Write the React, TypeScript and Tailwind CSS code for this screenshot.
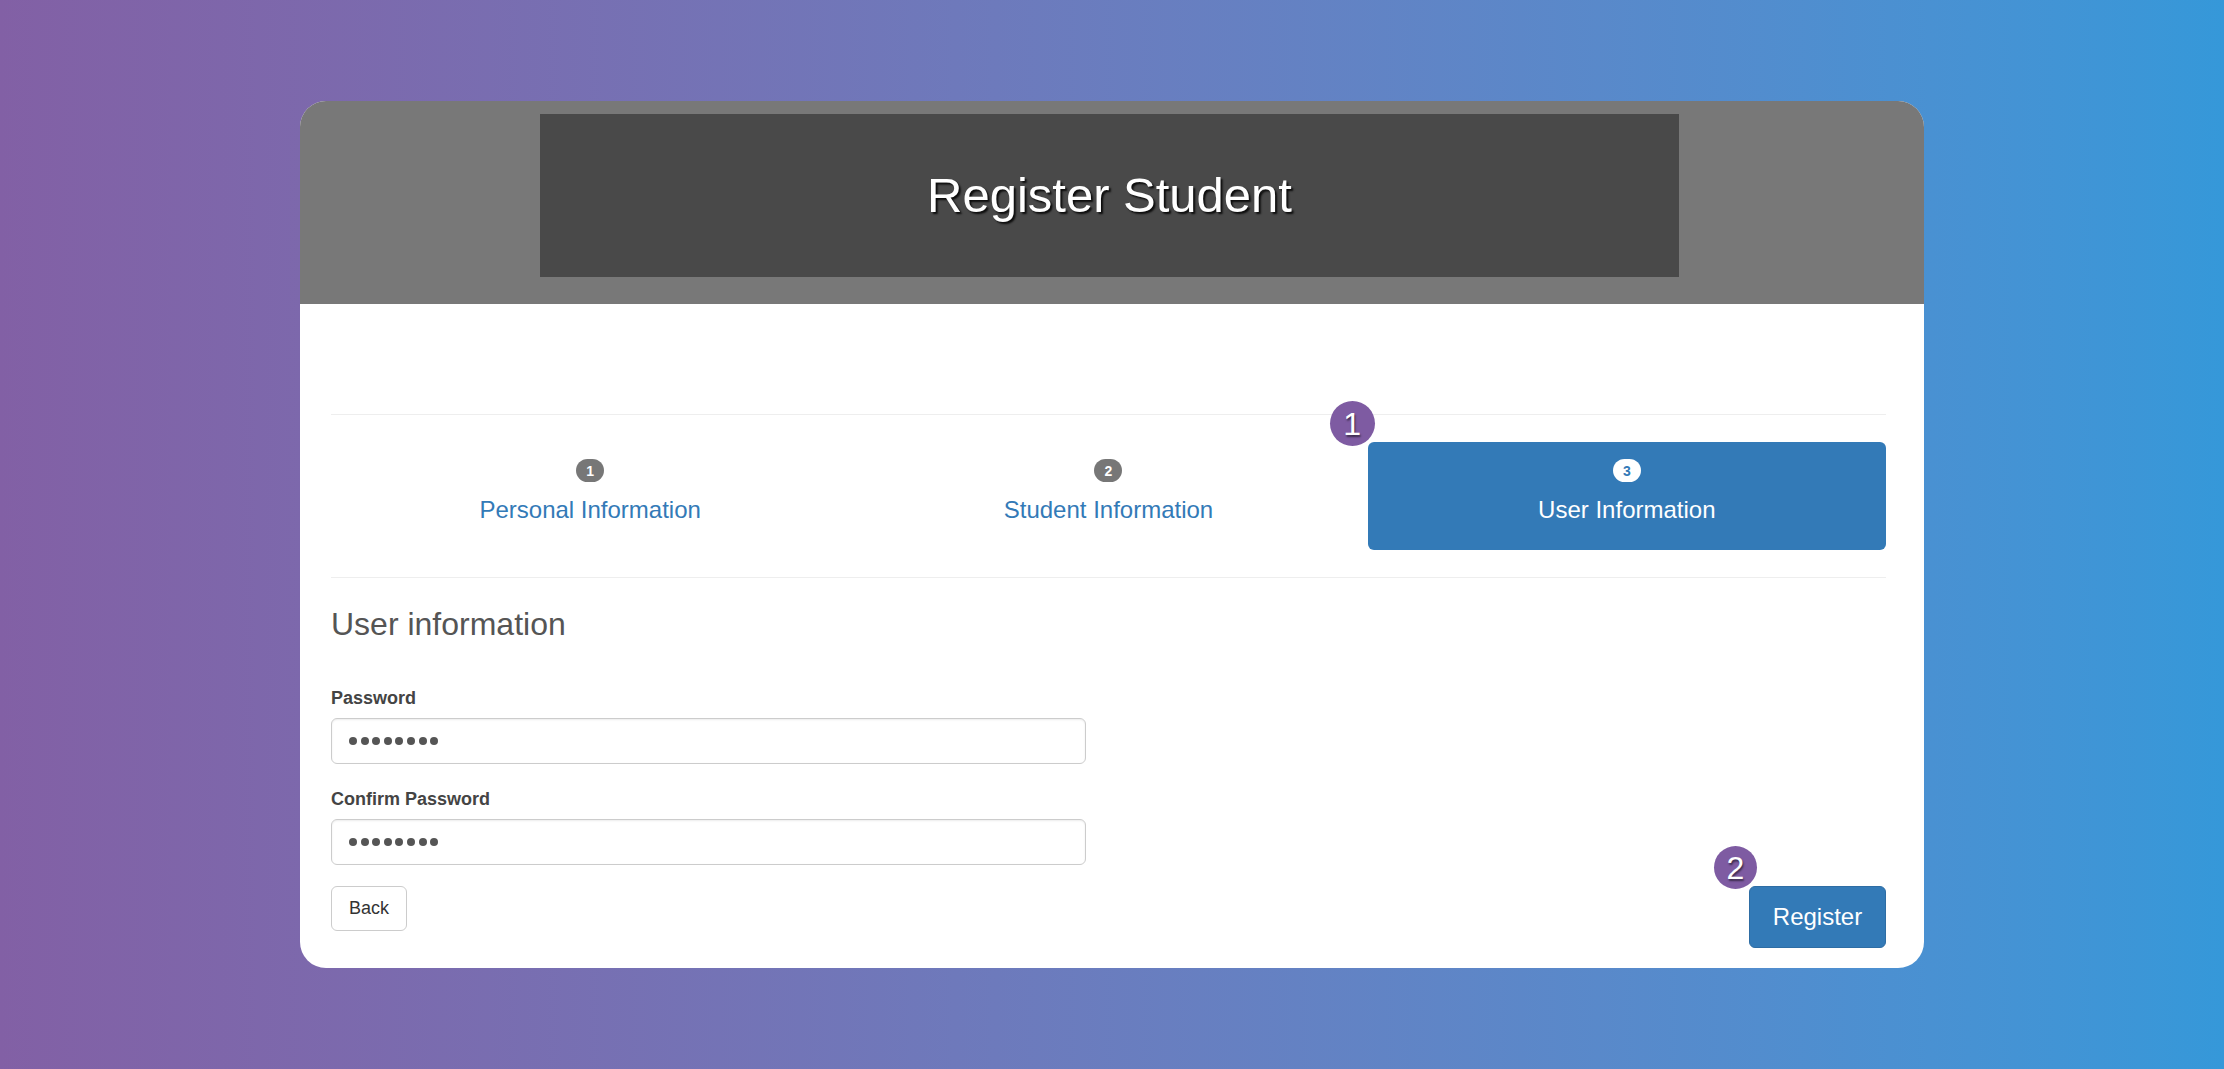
import React from 'react'

// Registration wizard, last step: user credentials.

const steps = [
  { n: 1, title: 'Personal Information' },
  { n: 2, title: 'Student Information' },
  { n: 3, title: 'User Information' },
]

function Callout({ n, className }: { n: number; className: string }) {
  return (
    <span
      className={`absolute flex items-center justify-center rounded-full bg-[#7e5ba2] text-[32px] leading-none text-white [text-shadow:1px_2px_2px_rgba(0,0,0,0.55)] ${className}`}
    >
      {n}
    </span>
  )
}

function PasswordField({ label }: { label: string }) {
  return (
    <div className="w-[755px]">
      <label className="block text-[18px] leading-[20px] font-bold text-[#444]">{label}</label>
      <div className="mt-[10px] flex h-[46px] items-center gap-[3.6px] rounded-[6px] border border-[#ccc] bg-white pl-[17px] shadow-[inset_0_1px_2px_rgba(0,0,0,0.08)]">
        {Array.from({ length: 8 }).map((_, i) => (
          <span key={i} className="size-[8px] rounded-full bg-[#555]" />
        ))}
      </div>
    </div>
  )
}

export default function App() {
  return (
    <div className="min-h-[1069px] bg-gradient-to-r from-[#8260a5] to-[#3598d9] pt-[101px] font-['Liberation_Sans',Arial,sans-serif]">
      <div className="mx-auto w-[1624px] overflow-hidden rounded-[26px] bg-white">
        <header className="bg-[#787878] pt-[13px] pb-[27px]">
          <div className="ml-[240px] flex h-[163px] w-[1139px] items-center justify-center bg-[#494949]">
            <h1 className="text-[49px] leading-none text-white [text-shadow:2px_2px_2px_rgba(0,0,0,0.85)]">
              Register Student
            </h1>
          </div>
        </header>

        <div className="pt-[110px] pr-[38px] pb-[20px] pl-[31px]">
          <nav className="flex border-y border-[#eee] py-[27px]">
            {steps.map((s) => {
              const active = s.n === 3
              return (
                <div
                  key={s.n}
                  className={`relative flex h-[108px] flex-1 flex-col items-center pt-[17px] ${
                    active ? 'rounded-[6px] bg-[#337ab7] text-white' : 'text-[#337ab7]'
                  }`}
                >
                  <span
                    className={`flex h-[23px] min-w-[28px] items-center justify-center rounded-full px-[8px] text-[14px] leading-none font-bold ${
                      active ? 'bg-white text-[#337ab7]' : 'bg-[#777] text-white'
                    }`}
                  >
                    {s.n}
                  </span>
                  <span className="mt-[15px] text-[24px] leading-[26px]">{s.title}</span>
                  {active && <Callout n={1} className="-top-[41px] -left-[38px] size-[45px]" />}
                </div>
              )
            })}
          </nav>

          <h2 className="mt-[29px] text-[32px] leading-[35px] text-[#555]">User information</h2>

          <div className="mt-[46px] flex flex-col gap-[25px]">
            <PasswordField label="Password" />
            <PasswordField label="Confirm Password" />
          </div>

          <div className="mt-[21px] flex items-start justify-between">
            <button className="h-[45px] w-[76px] rounded-[6px] border border-[#ccc] bg-white text-[18px] text-[#333]">
              Back
            </button>
            <div className="relative">
              <Callout n={2} className="-top-[40px] -left-[35px] size-[43px]" />
              <button className="h-[62px] w-[137px] rounded-[6px] border border-[#2e6da4] bg-[#337ab7] text-[24px] text-white">
                Register
              </button>
            </div>
          </div>
        </div>
      </div>
    </div>
  )
}
